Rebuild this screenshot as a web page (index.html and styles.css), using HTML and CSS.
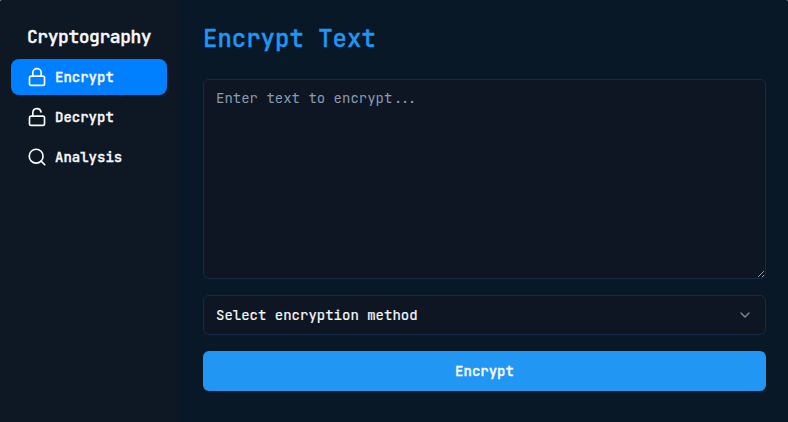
FILE: index.html
```html
<!DOCTYPE html>
<html lang="en">
<head>
<meta charset="utf-8">
<title>Cryptography</title>
<link rel="stylesheet" href="styles.css">
</head>
<body>
<div class="app">
  <aside class="sidebar">
    <h2 class="brand">Cryptography</h2>
    <nav class="nav">
      <a class="nav-item active"><svg class="icon" viewBox="0 0 24 24"><rect x="3" y="11" width="18" height="11" rx="2"/><path d="M7 11V7a5 5 0 0 1 10 0v4"/></svg><span>Encrypt</span></a>
      <a class="nav-item"><svg class="icon" viewBox="0 0 24 24"><rect x="3" y="11" width="18" height="11" rx="2"/><path d="M7 11V7a5 5 0 0 1 9.9-1"/></svg><span>Decrypt</span></a>
      <a class="nav-item"><svg class="icon" viewBox="0 0 24 24"><circle cx="11" cy="11" r="8.3"/><path d="m21.3 21.3-4.3-4.3"/></svg><span>Analysis</span></a>
    </nav>
  </aside>
  <main class="main">
    <h1 class="title">Encrypt Text</h1>
    <textarea class="field" placeholder="Enter text to encrypt..."></textarea>
    <button class="select"><span>Select encryption method</span><svg class="chevron" viewBox="0 0 24 24"><path d="m6 9 6 6 6-6"/></svg></button>
    <button class="submit"><span>Encrypt</span></button>
  </main>
</div>
</body>
</html>
```
FILE: styles.css
```css
* { box-sizing: border-box; margin: 0; }
body {
  background: #7f9799;
  color: #f8fafc;
  font: 14px/20px "JetBrains Mono", "DejaVu Sans Mono", monospace;
  overflow: hidden;
}
.app {
  display: flex;
  height: 422px;
  background: #081827;
  border-radius: 3px 2px 0 0;
  overflow: hidden;
}
.sidebar {
  width: 179px;
  padding: 23px 12px 0 11px;
  background: #0e1724;
}
.brand {
  padding-left: 16px;
  margin-bottom: 8px;
  font-size: 18px;
  line-height: 28px;
  font-weight: 500;
  letter-spacing: -0.025em;
  -webkit-text-stroke: 0.4px;
}
.nav { display: flex; flex-direction: column; gap: 4px; }
.nav-item {
  display: flex;
  align-items: center;
  gap: 8px;
  height: 36px;
  padding: 0 16px;
  border-radius: 8px;
}
.nav-item span, .submit span { font-weight: 500; -webkit-text-stroke: 0.35px; }
.active { background: #0080ff; }
.icon, .chevron {
  width: 20px;
  height: 20px;
  flex: none;
  fill: none;
  stroke: currentColor;
  stroke-width: 2;
  stroke-linecap: round;
  stroke-linejoin: round;
}
.main {
  flex: 1;
  display: flex;
  flex-direction: column;
  padding: 23px 22px 0 24px;
}
.title {
  margin-bottom: 24px;
  color: #2196f3;
  font-size: 24px;
  line-height: 32px;
  font-weight: 500;
  -webkit-text-stroke: 0.35px;
}
.field, .select {
  background: #0e1624;
  border: 1px solid #172a48;
  border-radius: 6px;
  font: inherit;
  color: inherit;
}
.field {
  height: 200px;
  padding: 8px 12px;
  margin-bottom: 16px;
  outline: none;
  resize: vertical;
}
.field::placeholder { color: #8b9bb0; }
.select {
  display: flex;
  align-items: center;
  justify-content: space-between;
  height: 40px;
  padding: 0 12px;
  margin-bottom: 16px;
}
.select span { -webkit-text-stroke: 0.2px; }
.chevron { width: 16px; height: 16px; opacity: 0.5; }
.submit {
  height: 40px;
  border: 0;
  border-radius: 6px;
  background: #2196f3;
  color: #f8fafc;
  font: inherit;
}
```
